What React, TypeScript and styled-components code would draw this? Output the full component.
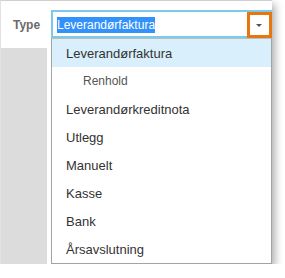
import React from "react";
import styled, { createGlobalStyle } from "styled-components";

const Global = createGlobalStyle`
  html, body { margin: 0; padding: 0; background: #ffffff; }
  body { font-family: "Liberation Sans", Arial, sans-serif; }
`;

const Frame = styled.div`
  width: 272px;
  height: 264px;
  box-sizing: border-box;
  border-top: 1px solid #cfcfcf;
  border-left: 1px solid #e2e2e2;
  background: #ffffff;
  display: flex;
  flex-direction: column;
  box-shadow: 3px 4px 8px rgba(0, 0, 0, 0.32);
`;

const Header = styled.div`
  height: 47px;
  flex: none;
  display: flex;
  align-items: flex-start;
  padding-top: 9px;
  box-sizing: border-box;
  background: #ffffff;
  position: relative;
  z-index: 2;
`;

const Label = styled.div`
  width: 50px;
  flex: none;
  box-sizing: border-box;
  padding-left: 12px;
  height: 28px;
  line-height: 30px;
  font-size: 12px;
  font-weight: 700;
  color: #6a6a6a;
`;

const Field = styled.div`
  position: relative;
  width: 221px;
  height: 28px;
  box-sizing: border-box;
  border: 2px solid #7ccaea;
  display: flex;
  align-items: center;
  padding-left: 4px;
  background: #ffffff;
`;

const Value = styled.div`
  flex: 1;
  font-size: 12px;
  line-height: 12px;
  color: #333333;
  margin-top: 2px;
`;

const Selected = styled.span`
  background: #3391fb;
  color: #ffffff;
  padding: 1px 0;
`;

const Caret = styled.div`
  width: 24px;
  height: 24px;
  display: flex;
  align-items: center;
  justify-content: center;
  flex: none;
  margin-top: 2px;
`;

const Triangle = styled.div`
  width: 0;
  height: 0;
  border-left: 3px solid transparent;
  border-right: 3px solid transparent;
  border-top: 3px solid #555555;
  margin-left: 1px;
`;

const Annotation = styled.div`
  position: absolute;
  top: 0;
  right: -2px;
  width: 25px;
  height: 26px;
  box-sizing: border-box;
  border: 3px solid #e8760f;
  pointer-events: none;
`;

const Menu = styled.ul`
  position: absolute;
  top: calc(100% + 2px);
  left: -2px;
  width: 221px;
  margin: 0;
  padding: 0;
  list-style: none;
  box-sizing: border-box;
  border: 1px solid #a3a3a3;
  border-top: 1px solid #bdbdbd;
  background: #ffffff;
`;

const Item = styled.li<{ $active?: boolean; $child?: boolean }>`
  height: 28px;
  line-height: 29px;
  padding-left: ${(p) => (p.$child ? "31px" : "14px")};
  font-size: ${(p) => (p.$child ? "12px" : "13px")};
  color: ${(p) => (p.$child ? "#555555" : "#333333")};
  background: ${(p) => (p.$active ? "#d9effb" : "transparent")};
  white-space: nowrap;
`;

const Body = styled.div`
  flex: 1;
  display: flex;
`;

const Sidebar = styled.div`
  width: 46px;
  flex: none;
  background: #dcdcdc;
`;

const Content = styled.div`
  flex: 1;
  background: #ffffff;
`;

const options: { label: string; child?: boolean }[] = [
  { label: "Leverandørfaktura" },
  { label: "Renhold", child: true },
  { label: "Leverandørkreditnota" },
  { label: "Utlegg" },
  { label: "Manuelt" },
  { label: "Kasse" },
  { label: "Bank" },
  { label: "Årsavslutning" },
];

export default function App() {
  return (
    <>
      <Global />
      <Frame>
        <Header>
          <Label>Type</Label>
          <Field>
            <Value>
              <Selected>Leverandørfaktura</Selected>
            </Value>
            <Caret>
              <Triangle />
            </Caret>
            <Annotation />
            <Menu>
              {options.map((o, i) => (
                <Item key={o.label} $active={i === 0} $child={o.child}>
                  {o.label}
                </Item>
              ))}
            </Menu>
          </Field>
        </Header>
        <Body>
          <Sidebar />
          <Content />
        </Body>
      </Frame>
    </>
  );
}
